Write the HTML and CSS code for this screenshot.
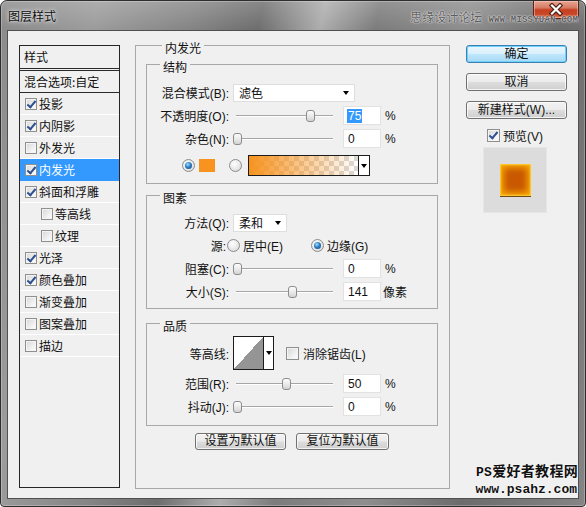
FILE: index.html
```html
<!DOCTYPE html>
<html lang="zh-CN">
<head>
<meta charset="utf-8">
<title>图层样式</title>
<link rel="stylesheet" href="styles.css">
</head>
<body>
<div class="window">
  <div class="titlebar">
    <span class="title">图层样式</span>
    <span class="close"><svg width="18" height="13" viewBox="0 0 18 13"><path d="M5 2.5 L13 10.5 M13 2.5 L5 10.5" stroke="#4a1c12" stroke-width="4.4" stroke-linecap="square"/><path d="M5 2.5 L13 10.5 M13 2.5 L5 10.5" stroke="#ffffff" stroke-width="2.2" stroke-linecap="square"/></svg></span>
    <div class="tb-mark"><span class="tb-cn">思缘设计论坛</span><span class="tb-en">WWW.MISSYUAN.COM</span></div>
  </div>
  <div class="client">
    <div class="list">
      <div class="list-head">样式</div>
      <div class="list-blend">混合选项:自定</div>
      <div class="item"><span class="cb on"></span>投影</div>
      <div class="item"><span class="cb on"></span>内阴影</div>
      <div class="item"><span class="cb"></span>外发光</div>
      <div class="item sel"><span class="cb on"></span>内发光</div>
      <div class="item"><span class="cb on"></span>斜面和浮雕</div>
      <div class="item sub"><span class="cb"></span>等高线</div>
      <div class="item sub"><span class="cb"></span>纹理</div>
      <div class="item"><span class="cb on"></span>光泽</div>
      <div class="item"><span class="cb on"></span>颜色叠加</div>
      <div class="item"><span class="cb"></span>渐变叠加</div>
      <div class="item"><span class="cb"></span>图案叠加</div>
      <div class="item"><span class="cb"></span>描边</div>
    </div>

    <div class="panel">
      <div class="legend">内发光</div>
      <div class="group g1">
        <div class="legend">结构</div>
        <div class="row">
          <span class="lbl">混合模式(B):</span>
          <span class="select sel-blend"><span>滤色</span><i class="arrow"></i></span>
        </div>
        <div class="row">
          <span class="lbl">不透明度(O):</span>
          <span class="slider"><i class="thumb" style="left:72.75px"></i></span>
          <span class="num"><span class="hl">75</span></span>
          <span class="unit">%</span>
        </div>
        <div class="row">
          <span class="lbl">杂色(N):</span>
          <span class="slider"><i class="thumb" style="left:0px"></i></span>
          <span class="num">0</span>
          <span class="unit">%</span>
        </div>
        <div class="row row-color">
          <span class="radio on"></span>
          <span class="swatch"></span>
          <span class="radio r-grad"></span>
          <span class="grad"><span class="grad-fill"></span><span class="drop"><i class="arrow"></i></span></span>
        </div>
      </div>

      <div class="group g2">
        <div class="legend">图素</div>
        <div class="row">
          <span class="lbl">方法(Q):</span>
          <span class="select sel-method"><span>柔和</span><i class="arrow"></i></span>
        </div>
        <div class="row">
          <span class="lbl lbl-src">源:</span>
          <span class="radio"></span>
          <span class="opt opt-center">居中(E)</span>
          <span class="radio on"></span>
          <span class="opt">边缘(G)</span>
        </div>
        <div class="row">
          <span class="lbl">阻塞(C):</span>
          <span class="slider"><i class="thumb" style="left:0px"></i></span>
          <span class="num">0</span>
          <span class="unit">%</span>
        </div>
        <div class="row">
          <span class="lbl">大小(S):</span>
          <span class="slider"><i class="thumb" style="left:54.7px"></i></span>
          <span class="num">141</span>
          <span class="unit unit-px">像素</span>
        </div>
      </div>

      <div class="group g3">
        <div class="legend">品质</div>
        <div class="row row-contour">
          <span class="lbl">等高线:</span>
          <span class="contour"><span class="contour-fill"></span><span class="drop"><i class="arrow"></i></span></span>
          <span class="cb cb-aa"></span>
          <span class="opt">消除锯齿(L)</span>
        </div>
        <div class="row">
          <span class="lbl">范围(R):</span>
          <span class="slider"><i class="thumb" style="left:48.5px"></i></span>
          <span class="num">50</span>
          <span class="unit">%</span>
        </div>
        <div class="row">
          <span class="lbl">抖动(J):</span>
          <span class="slider"><i class="thumb" style="left:0px"></i></span>
          <span class="num">0</span>
          <span class="unit">%</span>
        </div>
      </div>

      <div class="defaults">
        <span class="btn btn-def1">设置为默认值</span>
        <span class="btn btn-def2">复位为默认值</span>
      </div>
    </div>

    <div class="actions">
      <span class="btn btn-ok">确定</span>
      <span class="btn">取消</span>
      <span class="btn">新建样式(W)...</span>
      <div class="preview-row"><span class="cb on"></span><span>预览(V)</span></div>
      <div class="preview"><div class="preview-square"></div></div>
    </div>

    <div class="wm">
      <div class="wm-cn"><span class="wm-ps">PS</span>爱好者教程网</div>
      <div class="wm-url">www.psahz.com</div>
    </div>
  </div>
</div>
</body>
</html>
```

FILE: styles.css
```css
* { box-sizing: border-box; }
html, body { margin: 0; padding: 0; }
body {
  width: 586px;
  height: 507px;
  overflow: hidden;
  background: #ffffff;
  font-family: "Liberation Sans", "Noto Sans CJK SC", sans-serif;
  font-size: 12px;
  color: #111;
}

/* window frame */
.window {
  width: 586px;
  height: 507px;
  padding: 0 6px 7px 6px;
  border: 1px solid #2e2e2e;
  border-radius: 7px 7px 4px 4px;
  display: flex;
  flex-direction: column;
  background:
    linear-gradient(180deg, rgba(255,255,255,0.18) 0px, rgba(255,255,255,0) 28px),
    linear-gradient(102deg, #8a8a8a 0%, #9c9c9c 14%, #858585 28%, #6e6e6e 38%, #adadad 47%, #7c7c7c 55%, #8e8e8e 68%, #6c6c6c 82%, #858585 100%);
  box-shadow: inset 0 0 0 1px rgba(255,255,255,0.25);
}

.titlebar {
  position: relative;
  height: 29px;
  display: flex;
  align-items: flex-start;
  flex: none;
}
.title {
  margin-left: 1px;
  line-height: 29px;
  font-family: "Noto Sans CJK SC", sans-serif;
  font-size: 12px;
  color: #0c0c0c;
  text-shadow: 0 0 5px rgba(255,255,255,0.9), 0 0 2px rgba(255,255,255,0.8);
}
.close {
  margin-left: auto;
  width: 46px;
  height: 18px;
  border: 1px solid #5a2218;
  border-top: none;
  border-radius: 0 0 4px 4px;
  background: linear-gradient(180deg, #e7a593 0%, #d67a62 40%, #c5401f 52%, #c9492a 80%, #e07a52 100%);
  box-shadow: inset 0 0 0 1px rgba(255,220,210,0.45);
  display: flex;
  align-items: center;
  justify-content: center;
  position: relative;
  z-index: 1;
}
.tb-mark {
  position: absolute;
  right: 1px;
  top: 8px;
  display: flex;
  align-items: baseline;
  z-index: 2;
  color: #5c5c5c;
  text-shadow: 0 0 2px #e8e8e8, 0 0 1px #ffffff;
}
.tb-cn {
  font-family: "Noto Sans CJK SC", sans-serif;
  font-size: 12px;
  line-height: 16px;
  margin-right: 6px;
}
.tb-en {
  font-family: "Liberation Mono", monospace;
  font-weight: bold;
  font-size: 9px;
  letter-spacing: 0.2px;
  line-height: 12px;
}

/* client */
.client {
  position: relative;
  height: 469px;
  border: 1px solid #505050;
  background: #f0f0f0;
  display: flex;
  align-items: flex-start;
  padding: 14px 0 0 11px;
}

/* list */
.list {
  width: 101px;
  height: 443px;
  border: 1px solid #262626;
  background: #f0f0f0;
  flex: none;
  font-family: "Noto Sans CJK SC", sans-serif;
}
.list-head {
  height: 25px;
  line-height: 22px;
  padding-left: 4px;
  border-bottom: 3px double #2a2a2a;
}
.list-blend {
  height: 22px;
  line-height: 21px;
  padding-left: 4px;
  border-bottom: 1px solid #2a2a2a;
}
.item {
  height: 22px;
  line-height: 21px;
  border-bottom: 1px solid #ffffff;
  display: flex;
  align-items: center;
  padding-left: 5px;
}
.item.sub { padding-left: 21px; }
.item.sel { background: #3399ff; color: #ffffff; border-bottom-color: #3399ff; }
.item .cb { width: 12px; height: 12px; margin-right: 2px; }

/* checkbox */
.cb {
  position: relative;
  display: inline-block;
  flex: none;
  width: 13px;
  height: 13px;
  border: 1px solid #8e8f8f;
  background: linear-gradient(135deg, #d6d6d6 0%, #f4f4f4 70%, #ffffff 100%);
  box-shadow: inset 0 0 0 1px #f4f4f4;
}
.cb.on::after {
  content: "";
  position: absolute;
  left: 3px;
  top: 0px;
  width: 3px;
  height: 7px;
  border: solid #2f4f8f;
  border-width: 0 2px 2px 0;
  transform: rotate(40deg);
}

/* middle panel */
.panel {
  margin-left: 15px;
  width: 315px;
  height: 444px;
  border: 1px solid #a8a8a8;
  padding: 0 11px 0 10px;
  flex: none;
  font-family: "Liberation Sans", "Noto Sans CJK SC", sans-serif;
}
.legend {
  width: max-content;
  margin: -5px 0 0 16px;
  padding: 0 3px;
  line-height: 14px;
  background: #f0f0f0;
  font-family: "Noto Sans CJK SC", sans-serif;
}
.group {
  border: 1px solid #a8a8a8;
}
.group .legend { margin-left: 13px; }
.g1 { margin-top: 9px; padding-bottom: 6px; }
.g1 > .legend { margin-bottom: 7px; }
.g2 { margin-top: 11px; padding-bottom: 5px; }
.g2 > .legend { margin-bottom: 6px; }
.g3 { margin-top: 14px; padding-bottom: 7px; }
.g3 > .legend { margin-bottom: 3px; }

.row {
  height: 23px;
  display: flex;
  align-items: center;
  white-space: nowrap;
}
.lbl {
  width: 82px;
  margin-right: 4px;
  text-align: right;
  flex: none;
}
.lbl-src { width: 79px; margin-right: 1px; }

.select {
  height: 18px;
  background: #ffffff;
  border: 1px solid #dedede;
  display: flex;
  align-items: center;
  justify-content: space-between;
  padding: 0 5px 0 5px;
  font-family: "Noto Sans CJK SC", sans-serif;
}
.sel-blend { width: 122px; }
.sel-method { width: 54px; }
.arrow {
  display: block;
  width: 0;
  height: 0;
  border-left: 3.5px solid transparent;
  border-right: 3.5px solid transparent;
  border-top: 4px solid #000;
}

.slider {
  position: relative;
  width: 104px;
  height: 23px;
  flex: none;
}
.slider::before {
  content: "";
  position: absolute;
  left: 3px;
  right: 4px;
  top: 11px;
  height: 1px;
  background: #a6a6a6;
  box-shadow: 0 1px 0 #ffffff;
}
.thumb {
  position: absolute;
  top: 6px;
  width: 9px;
  height: 12px;
  border: 1px solid #8c8c8c;
  border-radius: 3px;
  background: linear-gradient(180deg, #fdfdfd 0%, #e6e6e6 60%, #d2d2d2 100%);
}
.num {
  margin-left: 6px;
  width: 38px;
  height: 19px;
  background: #ffffff;
  border: 1px solid #e2e2e2;
  padding-left: 4px;
  display: flex;
  align-items: center;
  line-height: 14px;
}
.hl { background: #3399ff; color: #ffffff; padding: 0 1px; margin-left: -1px; }
.unit { margin-left: 4px; }
.unit-px { margin-left: 2px; font-family: "Noto Sans CJK SC", sans-serif; }

/* radios */
.radio {
  position: relative;
  display: inline-block;
  flex: none;
  width: 13px;
  height: 13px;
  border-radius: 50%;
  border: 1px solid #8c8c8c;
  background: radial-gradient(circle at 40% 35%, #ffffff 0%, #e8e8e8 55%, #cfcfcf 100%);
}
.radio.on::after {
  content: "";
  position: absolute;
  left: 2px;
  top: 2px;
  width: 7px;
  height: 7px;
  border-radius: 50%;
  background: radial-gradient(circle at 40% 35%, #a8dcff 0%, #2d7fc4 45%, #0f3f78 100%);
}
.opt { margin-left: 3px; }
.opt-center { width: 68px; }
.row-color { padding-left: 35px; height: 23px; margin-top: 4px; }
.swatch {
  margin-left: 4px;
  width: 16px;
  height: 13px;
  background: #f7931e;
}
.r-grad { margin-left: 14px; }
.grad {
  margin-left: 6px;
  width: 122px;
  height: 21px;
  border: 1px solid #1c1c1c;
  display: flex;
  flex: none;
}
.grad-fill {
  flex: 1;
  background:
    linear-gradient(90deg, #f7931e 0%, rgba(247,147,30,0.55) 45%, rgba(247,147,30,0) 100%),
    conic-gradient(#d9d9d9 25%, #ffffff 0 50%, #d9d9d9 0 75%, #ffffff 0) 0 0 / 10px 10px;
}
.drop {
  width: 11px;
  border-left: 1px solid #1c1c1c;
  background: #ffffff;
  display: flex;
  align-items: center;
  justify-content: center;
  flex: none;
}

/* contour */
.row-contour { height: 34px; }
.contour {
  width: 41px;
  height: 34px;
  border: 1px solid #1c1c1c;
  display: flex;
  flex: none;
}
.contour-fill {
  flex: 1;
  background: linear-gradient(to bottom right, #ffffff 50%, #959595 50%);
}
.row-contour .drop { width: 10px; }
.cb-aa { margin-left: 12px; }
.row-contour .opt { margin-left: 4px; }
.g3 .row-contour + .row { margin-top: 2px; }

/* buttons */
.btn {
  display: block;
  height: 18px;
  border: 1px solid #707070;
  border-radius: 3px;
  background: linear-gradient(180deg, #f2f2f2 0%, #ebebeb 48%, #dddddd 52%, #cfcfcf 100%);
  box-shadow: inset 0 0 0 1px rgba(255,255,255,0.75);
  text-align: center;
  line-height: 16px;
  font-family: "Liberation Sans", "Noto Sans CJK SC", sans-serif;
  color: #111;
}
.defaults {
  margin-top: 7px;
  display: flex;
  justify-content: center;
  gap: 10px;
}
.btn-def1 { width: 91px; height: 17px; line-height: 15px; }
.btn-def2 { width: 93px; height: 17px; line-height: 15px; }

.actions {
  margin-left: 16px;
  width: 101px;
  flex: none;
  display: flex;
  flex-direction: column;
}
.actions .btn + .btn { margin-top: 10px; }
.btn-ok {
  border-color: #3c7fb1;
  background: linear-gradient(180deg, #eaf6fd 0%, #d9f0fc 48%, #bee6fd 52%, #a7d9f5 100%);
  box-shadow: inset 0 0 0 1px #6fd0fb;
}
.preview-row {
  margin-top: 8px;
  height: 16px;
  display: flex;
  align-items: center;
  padding-left: 21px;
}
.preview-row .cb { margin-right: 3px; }
.preview {
  margin: 4px 0 0 17px;
  width: 64px;
  height: 66px;
  background: #dcdcdc;
  border: 1px solid #e6e6e6;
  padding: 16px 0 0 16px;
}
.preview-square {
  width: 31px;
  height: 32px;
  background: #c95800;
  box-shadow:
    inset 0 0 2px 1px #ffd23a,
    inset 0 0 6px 4px #f7a400,
    0 1px 0 #6e4a10;
}

/* watermark */
.wm {
  position: absolute;
  right: 0;
  bottom: 0;
  text-align: right;
  font-weight: bold;
  color: #111;
  text-shadow: 0 0 2px #ffffff, 0 0 1px #ffffff;
}
.wm-cn {
  font-family: "Noto Sans CJK SC", sans-serif;
  font-size: 14px;
  line-height: 17px;
  letter-spacing: 0.3px;
}
.wm-ps { font-family: "Liberation Mono", monospace; font-size: 13px; }
.wm-url {
  font-family: "Liberation Mono", monospace;
  font-size: 13px;
  line-height: 17px;
  padding-right: 1px;
}
```
